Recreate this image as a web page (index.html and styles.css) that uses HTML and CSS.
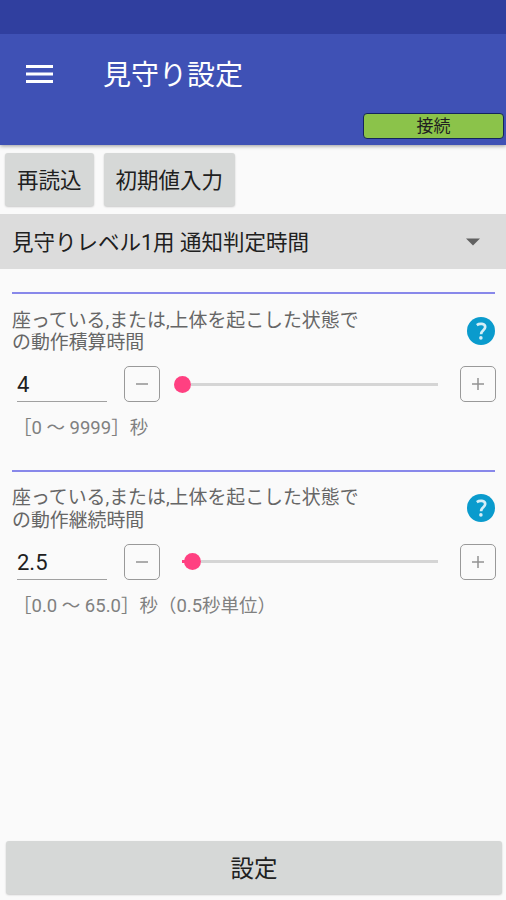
FILE: index.html
```
<!DOCTYPE html>
<html lang="ja">
<head>
    <meta charset="UTF-8">
    <title>見守り設定</title>
    <link rel="stylesheet" href="styles.css">
</head>
<body>
<div class="status-bar"></div>
<header class="app-bar">
    <div class="title-row">
        <svg class="menu-icon" width="27" height="20" viewBox="0 0 27 20">
            <path d="M0 2.5h27M0 10h27M0 17.5h27" stroke="#fff" stroke-width="3"/>
        </svg>
        <h1>見守り設定</h1>
    </div>
    <div class="connection">接続</div>
</header>

<div class="toolbar">
    <button class="btn">再読込</button>
    <button class="btn">初期値入力</button>
</div>

<div class="spinner">
    <span>見守りレベル1用 通知判定時間</span>
    <svg width="14" height="8" viewBox="0 0 14 8"><path d="M0 0.5h14l-7 7z" fill="#616161"/></svg>
</div>

<main class="settings">
    <section class="setting">
        <div class="setting-head">
            <p>座っている,または,上体を起こした状態で<br>の動作積算時間</p>
            <svg class="help" width="28" height="28" viewBox="0 0 28 28">
                <circle cx="14" cy="14" r="14" fill="#0a9bcd"/>
                <path d="M9.8 8.1c2.4-1.7 8.4-2 8.4 2 0 3.2-4.1 3.2-4.1 7.2" fill="none" stroke="#d5eef7" stroke-width="2.7"/>
                <circle cx="13.9" cy="20.9" r="1.8" fill="#d5eef7"/>
            </svg>
        </div>
        <div class="controls">
            <input class="value" type="text" value="4">
            <button class="step"><svg width="12" height="12" viewBox="0 0 12 12"><path d="M0 6h12"/></svg></button>
            <div class="slider"><span class="thumb first"></span><span class="track"></span></div>
            <button class="step"><svg width="12" height="12" viewBox="0 0 12 12"><path d="M0 6h12M6 0v12"/></svg></button>
        </div>
        <div class="range">［0 ～ 9999］秒</div>
    </section>

    <section class="setting">
        <div class="setting-head">
            <p>座っている,または,上体を起こした状態で<br>の動作継続時間</p>
            <svg class="help" width="28" height="28" viewBox="0 0 28 28">
                <circle cx="14" cy="14" r="14" fill="#0a9bcd"/>
                <path d="M9.8 8.1c2.4-1.7 8.4-2 8.4 2 0 3.2-4.1 3.2-4.1 7.2" fill="none" stroke="#d5eef7" stroke-width="2.7"/>
                <circle cx="13.9" cy="20.9" r="1.8" fill="#d5eef7"/>
            </svg>
        </div>
        <div class="controls">
            <input class="value" type="text" value="2.5">
            <button class="step"><svg width="12" height="12" viewBox="0 0 12 12"><path d="M0 6h12"/></svg></button>
            <div class="slider"><span class="passed"></span><span class="thumb"></span><span class="track"></span></div>
            <button class="step"><svg width="12" height="12" viewBox="0 0 12 12"><path d="M0 6h12M6 0v12"/></svg></button>
        </div>
        <div class="range">［0.0 ～ 65.0］秒（0.5秒単位）</div>
    </section>
</main>

<button class="btn submit">設定</button>
</body>
</html>
```

FILE: styles.css
```
* {
    box-sizing: border-box;
}

body {
    margin: 0;
    height: 900px;
    display: flex;
    flex-direction: column;
    overflow: hidden;
    background-color: #fafafa;
    color: #202020;
    font-family: Roboto, "Noto Sans CJK JP", sans-serif;
}

button, input {
    font-family: inherit;
    color: inherit;
    margin: 0;
    padding: 0;
}

.status-bar {
    height: 34px;
    background-color: #303f9f;
}

.app-bar {
    height: 111px;
    background-color: #3f51b5;
    box-shadow: 0 1px 4px rgba(0,0,0,0.4);
    clip-path: inset(0 0 -6px 0);
    display: flex;
    flex-direction: column;
}

.title-row {
    height: 79px;
    padding-left: 26px;
    display: flex;
    align-items: center;
    gap: 50px;
}

h1 {
    margin: 0;
    padding-top: 4px;
    font-size: 28px;
    font-weight: 400;
    line-height: 40px;
    color: #fff;
}

.connection {
    align-self: flex-end;
    width: 141px;
    height: 26px;
    margin-right: 2px;
    border: 1.5px solid #14245c;
    border-radius: 4px;
    background-color: #8bc34a;
    font-size: 17px;
    line-height: 25px;
    text-align: center;
}

.toolbar {
    height: 69px;
    padding: 8px 5px;
    display: flex;
    gap: 10px;
}

.btn {
    height: 53px;
    padding: 0 12px 2px;
    border: none;
    border-radius: 3px;
    background-color: #d6d8d7;
    box-shadow: 0 1px 2px rgba(0,0,0,0.2);
    font-size: 21.5px;
    white-space: nowrap;
}

.spinner {
    height: 55px;
    padding: 0 26px 0 12px;
    display: flex;
    align-items: center;
    justify-content: space-between;
    background-color: #dcdcdc;
    font-size: 21.5px;
}

.spinner span {
    padding-bottom: 2px;
}

.settings {
    flex: 1;
    padding: 23px 10px 0 12px;
}

.setting {
    height: 177.5px;
    margin-right: 1px;
    border-top: 2px solid #8888ea;
}

.setting-head {
    height: 72px;
    padding-top: 15.5px;
    display: flex;
    justify-content: space-between;
    color: #666;
}

.setting-head p {
    margin: 0;
    font-size: 18.9px;
    line-height: 22.5px;
    white-space: nowrap;
}

.help {
    margin-top: 7px;
}

.controls {
    height: 36px;
    display: flex;
    align-items: center;
    margin-right: -1px;
}

.value {
    width: 90px;
    height: 36px;
    margin: 0 17px 0 5px;
    padding-top: 2px;
    border: none;
    border-bottom: 1.5px solid #a0a0a0;
    background: none;
    font-size: 22px;
}

.step {
    width: 36px;
    height: 36px;
    flex-shrink: 0;
    border: 1.5px solid #999;
    border-radius: 5px;
    background: none;
    display: flex;
    align-items: center;
    justify-content: center;
}

.step path {
    stroke: #929292;
    stroke-width: 1.5;
}

.slider {
    flex: 1;
    margin: 0 22px;
    display: flex;
    align-items: center;
}

.thumb {
    width: 17px;
    height: 17px;
    border-radius: 50%;
    background-color: #ff4081;
}

.thumb.first {
    margin-left: -8.5px;
}

.passed {
    width: 3px;
    height: 3px;
    margin-right: -1.5px;
    background-color: #ff4081;
}

.track {
    flex: 1;
    height: 3px;
    background-color: #d5d5d5;
}

.range {
    margin-top: 12px;
    padding-left: 1px;
    font-size: 18.5px;
    line-height: 28px;
    color: #808080;
}

.submit {
    margin: 0 4px 6px 6px;
    font-size: 23.5px;
}
```
